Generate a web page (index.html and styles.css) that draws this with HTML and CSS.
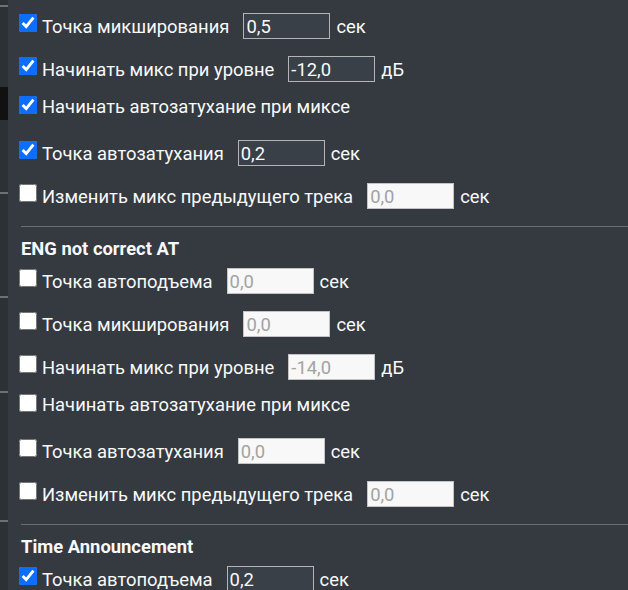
FILE: index.html
```html
<!DOCTYPE html>
<html lang="ru">
<head>
  <meta charset="UTF-8">
  <title>Настройки микса</title>
  <link rel="stylesheet" href="styles.css">
</head>
<body>

  <div class="page">
    <!-- край соседней панели -->
    <div class="side">
      <div class="side-line l1"></div>
      <div class="side-block"></div>
      <div class="side-line l2"></div>
      <div class="side-line l3"></div>
      <div class="side-line l4"></div>
      <div class="side-line l5"></div>
    </div>

    <div class="panel">
      <div class="row">
        <input type="checkbox" class="check" checked>
        <span class="label">Точка микширования</span>
        <input type="text" class="num" value="0,5">
        <span class="unit">сек</span>
      </div>
      <div class="row">
        <input type="checkbox" class="check" checked>
        <span class="label">Начинать микс при уровне</span>
        <input type="text" class="num" value="-12,0">
        <span class="unit">дБ</span>
      </div>
      <div class="row plain">
        <input type="checkbox" class="check" checked>
        <span class="label">Начинать автозатухание при миксе</span>
      </div>
      <div class="row">
        <input type="checkbox" class="check" checked>
        <span class="label">Точка автозатухания</span>
        <input type="text" class="num" value="0,2">
        <span class="unit">сек</span>
      </div>
      <div class="row">
        <input type="checkbox" class="check">
        <span class="label">Изменить микс предыдущего трека</span>
        <input type="text" class="num off" value="0,0">
        <span class="unit">сек</span>
      </div>

      <hr class="divider">
      <h3 class="section">ENG not correct AT</h3>

      <div class="row">
        <input type="checkbox" class="check">
        <span class="label">Точка автоподъема</span>
        <input type="text" class="num off" value="0,0">
        <span class="unit">сек</span>
      </div>
      <div class="row">
        <input type="checkbox" class="check">
        <span class="label">Точка микширования</span>
        <input type="text" class="num off" value="0,0">
        <span class="unit">сек</span>
      </div>
      <div class="row">
        <input type="checkbox" class="check">
        <span class="label">Начинать микс при уровне</span>
        <input type="text" class="num off" value="-14,0">
        <span class="unit">дБ</span>
      </div>
      <div class="row plain">
        <input type="checkbox" class="check">
        <span class="label">Начинать автозатухание при миксе</span>
      </div>
      <div class="row">
        <input type="checkbox" class="check">
        <span class="label">Точка автозатухания</span>
        <input type="text" class="num off" value="0,0">
        <span class="unit">сек</span>
      </div>
      <div class="row">
        <input type="checkbox" class="check">
        <span class="label">Изменить микс предыдущего трека</span>
        <input type="text" class="num off" value="0,0">
        <span class="unit">сек</span>
      </div>

      <hr class="divider">
      <h3 class="section">Time Announcement</h3>

      <div class="row">
        <input type="checkbox" class="check" checked>
        <span class="label">Точка автоподъема</span>
        <input type="text" class="num" value="0,2">
        <span class="unit">сек</span>
      </div>
    </div>
  </div>

</body>
</html>
```

FILE: styles.css
```css
body {
  margin: 0;
  background-color: #343a40;
  font-family: Roboto, 'Noto Sans', sans-serif;
  font-size: 18.4px;
  color: #f8f9fa;
  overflow: hidden;
}

.page {
  display: flex;
  height: 590px;
}

/* левая полоска */
.side {
  width: 8px;
  flex-shrink: 0;
  background-color: #2c3136;
}

.side-line {
  height: 2px;
  background-color: #6c7176;
}

.l1 { margin-top: 5px; }
.l2 { margin-top: 72px; }
.l3 { margin-top: 102px; }
.l4 { margin-top: 93px; }
.l5 { margin-top: 127px; }

.side-block {
  margin-top: 80px;
  height: 33px;
  background-color: #111;
}

.panel {
  flex: 1;
  padding: 13px 0 0 11px;
}

.row {
  display: flex;
  align-items: center;
  height: 26px;
  margin-bottom: 17px;
  white-space: nowrap;
}

.row.plain {
  height: 20px;
  margin-top: -3px;
  margin-bottom: 24px;
}

.check {
  align-self: flex-start;
  width: 18px;
  height: 18px;
  margin: 1px 0 0 0;
  accent-color: #0d6efd;
}

.row.plain .check {
  margin-top: 0;
}

.label {
  margin-left: 5px;
}

.num {
  box-sizing: border-box;
  width: 87px;
  height: 26px;
  margin-left: 14px;
  padding: 0 2px;
  border: 1px solid #b4b4b4;
  background-color: #3a4047;
  color: #f8f9fa;
  font-family: Roboto, 'Noto Sans', sans-serif;
  font-size: 18.4px;
}

.num.off {
  background-color: #f8f8f8;
  border-color: #c4c4c4;
  color: #a3a3a3;
}

.unit {
  margin-left: 6px;
}

.divider {
  margin: 2px 0 0 2px;
  border: none;
  border-top: 1px solid #6b6f73;
}

.section {
  margin: 11px 0 8px 2px;
  height: 22px;
  line-height: 22px;
  font-size: 18.4px;
  font-weight: bold;
}
```
